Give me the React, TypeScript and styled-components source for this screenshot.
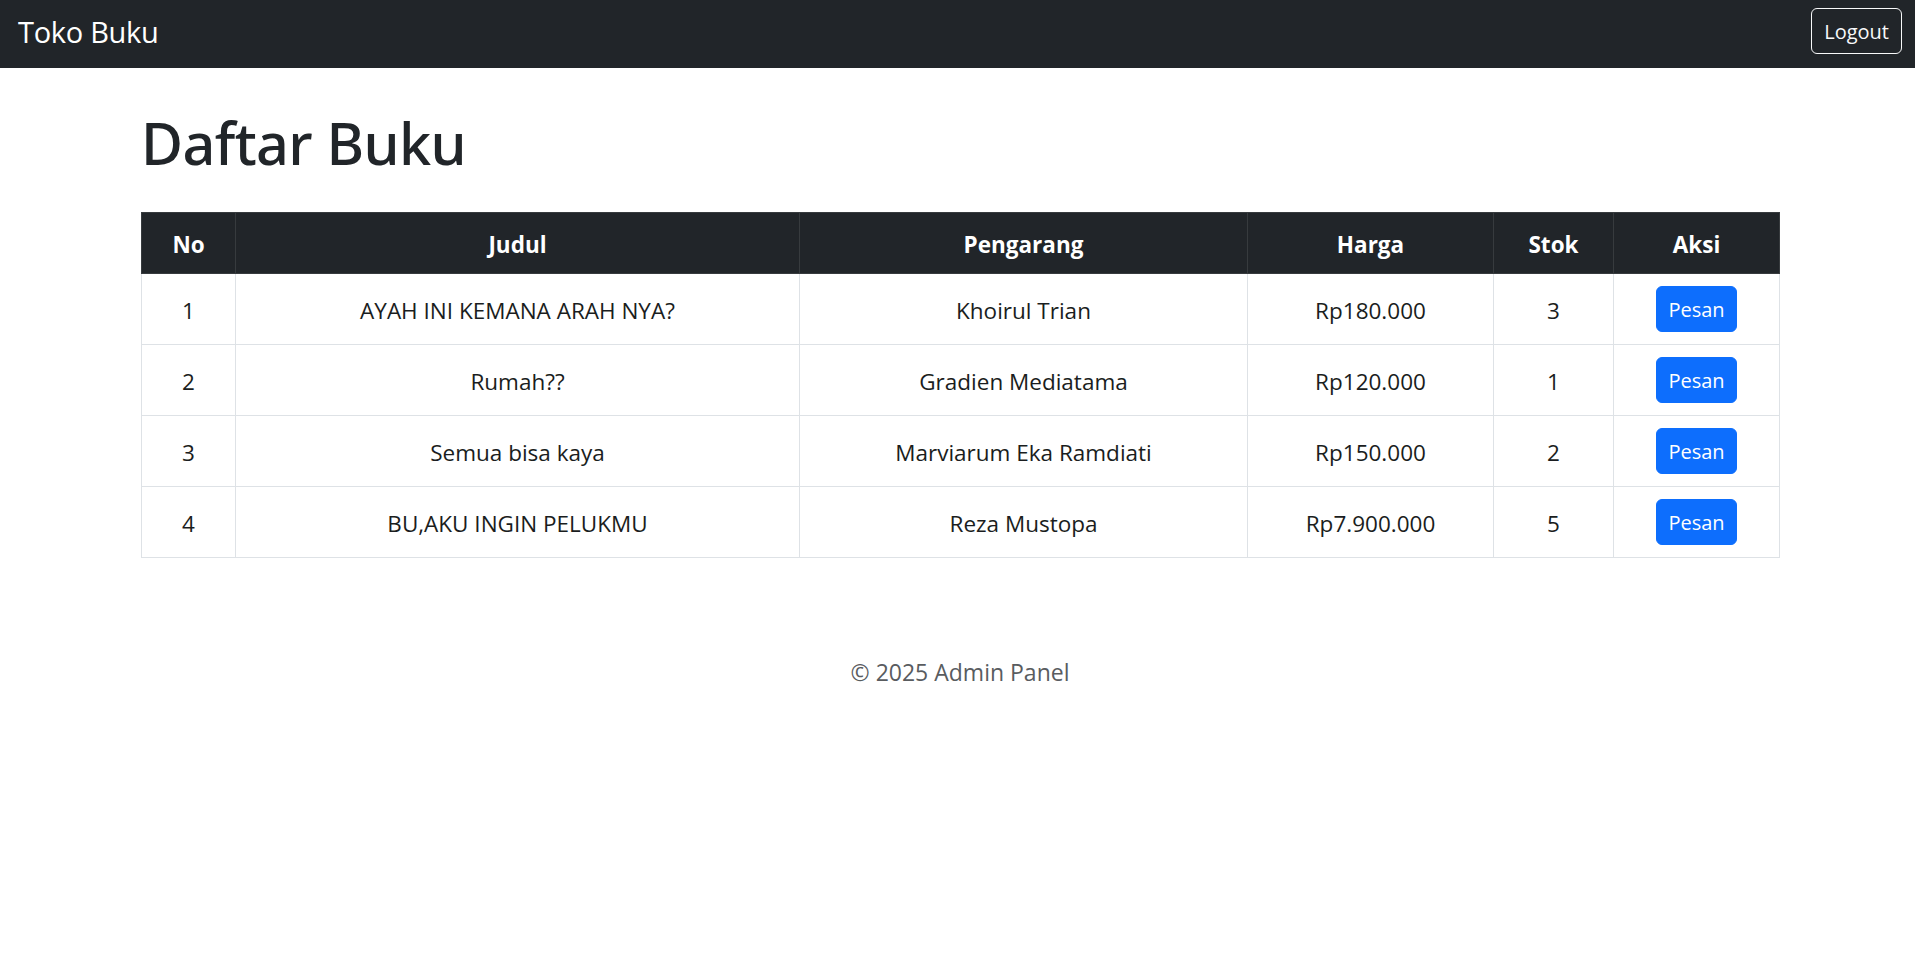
import React from "react";
import styled, { createGlobalStyle } from "styled-components";

const GlobalStyle = createGlobalStyle`
  html, body {
    margin: 0;
    padding: 0;
    background: #ffffff;
  }
  body {
    font-family: "Segoe UI", "Open Sans", "Noto Sans", sans-serif;
    color: #212529;
  }
  * { box-sizing: border-box; }
`;

const Navbar = styled.nav`
  height: 68px;
  background: #212529;
  display: flex;
  align-items: center;
  justify-content: space-between;
  padding: 0 13px 6px 18px;
`;

const Brand = styled.a`
  color: #ffffff;
  font-size: 29px;
  line-height: 45px;
  text-decoration: none;
  letter-spacing: -0.3px;
`;

const OutlineButton = styled.button`
  font-family: inherit;
  font-size: 20px;
  line-height: 31px;
  padding: 6.5px 12px;
  color: #f8f9fa;
  background: transparent;
  border: 1.5px solid #f8f9fa;
  border-radius: 6px;
  cursor: pointer;
`;

const Main = styled.main`
  padding: 36px 136px 0 141px;
`;

const Title = styled.h1`
  font-family: "Noto Sans", "Open Sans", sans-serif;
  font-size: 57.5px;
  font-weight: 500;
  line-height: 72px;
  margin: 2.5px 0 33.5px;
  color: #212529;
  letter-spacing: -0.6px;
`;

const Table = styled.table`
  width: 100%;
  border-collapse: collapse;
  table-layout: fixed;
  font-size: 22.5px;
`;

const HeadCell = styled.th`
  background: #212529;
  color: #ffffff;
  font-weight: 700;
  line-height: 36px;
  padding: 14px 12px 10px;
  border: 1px solid #373b3e;
  text-align: center;
  vertical-align: middle;
`;

const Cell = styled.td<{ $action?: boolean }>`
  color: #1a1d20;
  line-height: 36px;
  padding: ${(p) => (p.$action ? "12px" : "13.5px 12px 10.5px")};
  border: 1px solid #dee2e6;
  text-align: center;
  vertical-align: middle;
  height: 70.5px;
`;

const OrderButton = styled.button`
  font-family: inherit;
  font-size: 20px;
  line-height: 31px;
  padding: 6.5px 11px;
  color: #ffffff;
  background: #0d6efd;
  border: 1px solid #0d6efd;
  border-radius: 6px;
  cursor: pointer;
`;

const Footer = styled.footer`
  margin-top: 95.5px;
  text-align: center;
  font-size: 23px;
  line-height: 36px;
  color: #595c5f;
`;

const books = [
  { no: 1, judul: "AYAH INI KEMANA ARAH NYA?", pengarang: "Khoirul Trian", harga: "Rp180.000", stok: 3 },
  { no: 2, judul: "Rumah??", pengarang: "Gradien Mediatama", harga: "Rp120.000", stok: 1 },
  { no: 3, judul: "Semua bisa kaya", pengarang: "Marviarum Eka Ramdiati", harga: "Rp150.000", stok: 2 },
  { no: 4, judul: "BU,AKU INGIN PELUKMU", pengarang: "Reza Mustopa", harga: "Rp7.900.000", stok: 5 },
];

const colWidths = [94, 564, 448, 246, 120, 166];

export default function App() {
  return (
    <>
      <GlobalStyle />
      <Navbar>
        <Brand href="#">Toko Buku</Brand>
        <OutlineButton>Logout</OutlineButton>
      </Navbar>
      <Main>
        <Title>Daftar Buku</Title>
        <Table>
          <colgroup>
            {colWidths.map((w, i) => (
              <col key={i} style={{ width: w }} />
            ))}
          </colgroup>
          <thead>
            <tr>
              <HeadCell>No</HeadCell>
              <HeadCell>Judul</HeadCell>
              <HeadCell>Pengarang</HeadCell>
              <HeadCell>Harga</HeadCell>
              <HeadCell>Stok</HeadCell>
              <HeadCell>Aksi</HeadCell>
            </tr>
          </thead>
          <tbody>
            {books.map((b) => (
              <tr key={b.no}>
                <Cell>{b.no}</Cell>
                <Cell>{b.judul}</Cell>
                <Cell>{b.pengarang}</Cell>
                <Cell>{b.harga}</Cell>
                <Cell>{b.stok}</Cell>
                <Cell $action>
                  <OrderButton>Pesan</OrderButton>
                </Cell>
              </tr>
            ))}
          </tbody>
        </Table>
        <Footer>© 2025 Admin Panel</Footer>
      </Main>
    </>
  );
}
